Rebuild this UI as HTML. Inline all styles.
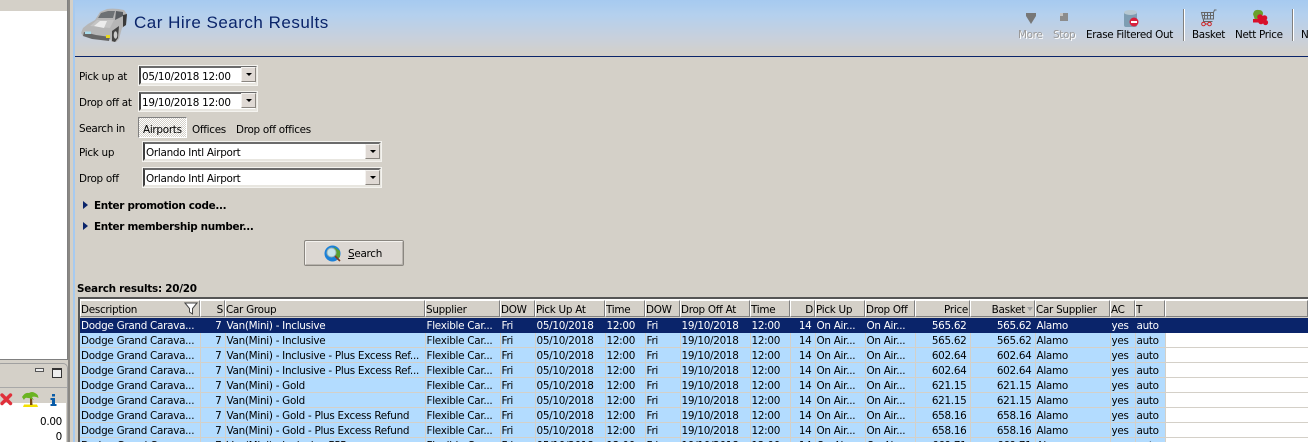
<!DOCTYPE html>
<html><head><meta charset="utf-8"><style>
html,body{margin:0;padding:0;width:1308px;height:442px;overflow:hidden;background:#d4d0c8;}
body{position:relative;font:10.4px "DejaVu Sans","Liberation Sans",sans-serif;color:#000;letter-spacing:-.28px;}
.a{position:absolute;white-space:nowrap;line-height:13px;}
.b{font-weight:bold;letter-spacing:-.3px;}
.box{position:absolute;box-sizing:border-box;background:#fff;border:2px solid;border-color:#6b6b6b #e8e6e0 #e8e6e0 #404040;outline:1px solid #f4f3ef;outline-offset:0;}
.btn{position:absolute;width:15px;height:15px;box-sizing:border-box;background:#dfd9d4;border:1px solid;border-color:#f4f2ef #8a8680 #8a8680 #f4f2ef;}
.btn:after{content:"";position:absolute;left:4px;top:5px;border:3px solid transparent;border-top:3px solid #000;border-bottom:0;}
table{position:absolute;left:80px;top:318px;border-collapse:collapse;table-layout:fixed;width:1228px;}
td{height:12px;padding:2px 1px 0 1px;border-right:1px solid #d4d0c8;border-bottom:1px solid #d4d0c8;background:#b3dcff;white-space:nowrap;overflow:hidden;line-height:12px;font-size:10.4px;box-sizing:content-box;}
td.r{text-align:right;padding-right:3px;}
td.f{background:#fff;border-right:0;}
tr.s td{background:#0a246a;color:#fff;border-color:#0a246a;}
.h{position:absolute;top:300px;height:17px;box-sizing:border-box;background:#d4d0c8;border:1px solid;border-color:#fff #808080 #808080 #fff;line-height:19px;padding:0;white-space:nowrap;overflow:hidden;}
.h.r{text-align:right;padding-right:1px;}
.t{position:absolute;top:29px;font-size:10.4px;line-height:13px;white-space:nowrap;letter-spacing:-.33px;}
.g{color:#9a9a9a;text-shadow:1px 1px 0 #fff;}
</style></head><body>
<!-- left panel -->
<div style="position:absolute;left:0;top:0;width:68px;height:11px;background:#d4d0c8"></div>
<div style="position:absolute;left:0;top:11px;width:67px;height:348px;background:#fff"></div>
<div style="position:absolute;left:0;top:359px;width:68px;height:1px;background:#808080"></div>
<div style="position:absolute;left:67px;top:0;width:1px;height:360px;background:#808080"></div>
<div style="position:absolute;left:68px;top:0;width:2px;height:442px;background:#8a8884"></div>
<div style="position:absolute;left:73px;top:0;width:2px;height:442px;background:#a6caf0"></div>
<div style="position:absolute;left:-4px;top:363px;width:72px;height:80px;box-sizing:border-box;border:1px solid #a0a0a0;border-radius:5px 5px 0 0"></div>
<div style="position:absolute;left:35px;top:368px;width:9px;height:4px;box-sizing:border-box;border:1px solid #555;background:#eee"></div>
<div style="position:absolute;left:52px;top:368px;width:10px;height:10px;box-sizing:border-box;border:1px solid #333;border-top-width:2px;background:#eee"></div>
<div style="position:absolute;left:0;top:387px;width:67px;height:1px;background:#a8a8a8"></div>
<div style="position:absolute;left:0;top:403px;width:66px;height:39px;background:#fff"></div>
<svg style="position:absolute;left:0;top:390px" width="66" height="18" viewBox="0 0 66 18">
<path d="M2 5L10.500 13.500M10.500 5L2 13.500" stroke="#e0303a" stroke-width="3.4" stroke-linecap="round"/>
<path d="M24 14.500h13l1 2.500H23z" fill="#f4e000"/>
<path d="M30 8h2l0.500 7h-2.500z" fill="#7a4a10"/>
<path d="M22 7Q25 2 29 3Q32 1 35 3Q38 4 38.500 8Q35 6 32 7Q33 9 34 10Q30 8 28 8Q25 7 24 10z" fill="#6ab422"/>
<rect x="52" y="4" width="3" height="2.500" fill="#0a5ca8"/><path d="M50.500 8h4.500v6h1.500v2h-6v-2h1.500v-4h-1.500z" fill="#0a5ca8"/>
</svg>
<div class="a" style="right:1246px;top:416px">0.00</div>
<div class="a" style="right:1246px;top:431px">0</div>
<!-- header band -->
<div style="position:absolute;left:75px;top:0;width:1233px;height:56px;background:linear-gradient(#a6caf0 0,#b4d0ee 15px,#c8d0dc 38px,#d4d0c8 56px)"></div>
<div style="position:absolute;left:75px;top:56px;width:1233px;height:1px;background:#0a246a"></div>
<svg style="position:absolute;left:80px;top:6px" width="50" height="38" viewBox="0 0 50 38">
<path d="M1 27L3 22L8 18L15 14L20 6L27 3Q36 2 44 4L47 8L46 19L42 22L39 33L36 36L32 36L30 33L12 31L3 30z" fill="#b6b6b6"/>
<path d="M21 7L28 5L35 5L33 12L18 12z" fill="#6d7174"/>
<path d="M36 5L43 6L43 10L35 14z" fill="#585c60"/>
<path d="M17 14L34 14L30 22L10 20z" fill="#c4c4c4"/>
<path d="M20 15L27 15L24 22L14 20z" fill="#ececec"/>
<path d="M4 26L16 29L30 31L29 35L12 33L3 30z" fill="#666"/>
<rect x="5" y="25.500" width="6" height="2.500" fill="#a8dcec"/><rect x="26" y="29" width="4" height="3" fill="#e8d820"/>
<path d="M32 25L39 20L38 32L35 36L32 35z" fill="#444"/><ellipse cx="35.500" cy="29" rx="1.800" ry="3.800" fill="#ccc"/>
<path d="M43 9L47 8L46 19L43 21z" fill="#3a3a3a"/>
</svg>
<div class="a" style="left:134px;top:12px;font:17px/21px 'Liberation Sans',sans-serif;letter-spacing:.5px;color:#0a246a">Car Hire Search Results</div>
<!-- toolbar -->
<svg style="position:absolute;left:1000px;top:8px" width="308" height="34" viewBox="0 0 308 34">
<path d="M26 5h10v3l-5 8-5-8z" fill="#777"/>
<rect x="60" y="5" width="8" height="8" fill="#8c8c8c"/><rect x="60" y="5" width="3" height="3" fill="#c4c4c4"/>
<rect x="124" y="4" width="13" height="15" rx="2" fill="#7e9db2"/><ellipse cx="130.500" cy="4.500" rx="6.500" ry="2.500" fill="#b6c8d2"/>
<circle cx="134" cy="14" r="4.500" fill="#d8203c"/><rect x="131" y="13" width="6" height="2" fill="#fff"/>
<rect x="183" y="1" width="1" height="32" fill="#808080"/><rect x="184" y="1" width="1" height="32" fill="#fff"/>
<rect x="292" y="1" width="1" height="32" fill="#808080"/><rect x="293" y="1" width="1" height="32" fill="#fff"/>
<path d="M201.500 4.500h12v6.500h-10.500zM213.500 4.500l1-2.500h2M202 7.500h11.500M203.500 11.500v2h9" fill="none" stroke="#666" stroke-width="1"/>
<path d="M204.500 4.500v6.500M207.500 4.500v6.500M210.500 4.500v6.500" stroke="#666"/>
<circle cx="203.500" cy="16" r="1.800" fill="none" stroke="#d02020"/><circle cx="209.500" cy="16" r="1.800" fill="none" stroke="#d02020"/><path d="M205.500 16h2" stroke="#d02020"/>
<path d="M253 6q1-5 6-4q4 0 4 4l-2 5-6 1z" fill="#6aa02a"/>
<circle cx="260" cy="9" r="2.800" fill="#d8102a"/><circle cx="264.500" cy="10" r="2.800" fill="#d8102a"/><circle cx="261" cy="13.500" r="2.800" fill="#d8102a"/><circle cx="265.500" cy="14.500" r="2.600" fill="#d8102a"/>
<rect x="253" y="11" width="6" height="3.500" fill="#d8102a"/>
</svg>
<div class="t g" style="left:1018px">More</div>
<div class="t g" style="left:1053px">Stop</div>
<div class="t" style="left:1086px">Erase Filtered Out</div>
<div class="t" style="left:1192px">Basket</div>
<div class="t" style="left:1235px">Nett Price</div>
<div class="t" style="left:1301px">N</div>
<!-- form -->
<div class="a" style="left:79px;top:71px">Pick up at</div>
<div class="box" style="left:139px;top:66px;width:118px;height:19px"></div>
<div class="a" style="left:142px;top:71px">05/10/2018 12:00</div>
<div class="btn" style="left:241px;top:67px"></div>
<div class="a" style="left:79px;top:97px">Drop off at</div>
<div class="box" style="left:139px;top:92px;width:118px;height:19px"></div>
<div class="a" style="left:142px;top:97px">19/10/2018 12:00</div>
<div class="btn" style="left:241px;top:93px"></div>
<div class="a" style="left:79px;top:123px">Search in</div>
<div style="position:absolute;left:138px;top:117px;width:49px;height:21px;box-sizing:border-box;border:1px solid;border-color:#808080 #fff #fff #808080;background:repeating-conic-gradient(#fff 0 25%,#d4d0c8 0 50%) 0 0/2px 2px"></div>
<div class="a" style="left:143px;top:124px">Airports</div>
<div class="a" style="left:192px;top:124px">Offices</div>
<div class="a" style="left:236px;top:124px">Drop off offices</div>
<div class="a" style="left:79px;top:147px">Pick up</div>
<div class="box" style="left:143px;top:142px;width:238px;height:19px"></div>
<div class="a" style="left:146px;top:147px">Orlando Intl Airport</div>
<div class="btn" style="left:365px;top:144px"></div>
<div class="a" style="left:79px;top:173px">Drop off</div>
<div class="box" style="left:143px;top:168px;width:238px;height:19px"></div>
<div class="a" style="left:146px;top:173px">Orlando Intl Airport</div>
<div class="btn" style="left:365px;top:170px"></div>
<div style="position:absolute;left:83px;top:201px;border:4px solid transparent;border-left:5px solid #0a246a;border-right:0"></div>
<div class="a b" style="left:94px;top:200px">Enter promotion code...</div>
<div style="position:absolute;left:83px;top:222px;border:4px solid transparent;border-left:5px solid #0a246a;border-right:0"></div>
<div class="a b" style="left:94px;top:221px">Enter membership number...</div>
<div style="position:absolute;left:304px;top:240px;width:100px;height:26px;box-sizing:border-box;background:#dcd7d2;border:1px solid #8a8680;border-radius:2px;box-shadow:inset 1px 1px 0 #f4f2ef,inset -1px -1px 0 #b8b4ae"></div>
<svg style="position:absolute;left:324px;top:245px" width="18" height="18" viewBox="0 0 18 18">
<circle cx="8.500" cy="8.500" r="8" fill="#1a80d8"/><path d="M10 2l6 4 0 6-3 2-2-5z" fill="#58a030"/>
<circle cx="7.500" cy="7.500" r="4.500" fill="#c8e4ea" stroke="#9ab0b0"/><path d="M11 11l5 5" stroke="#804020" stroke-width="1.600"/>
</svg>
<div class="a" style="left:348px;top:248px"><u>S</u>earch</div>
<div class="a b" style="left:77px;top:283px;letter-spacing:-.24px">Search results: 20/20</div>
<!-- grid -->
<div style="position:absolute;left:78px;top:297px;width:1230px;height:145px;border-top:2px solid #555;border-left:2px solid #555;box-sizing:border-box;background:#fff"></div>
<div style="position:absolute;left:80px;top:299px;width:1228px;height:19px;background:#d4d0c8;border-top:1px solid #fff;box-sizing:border-box"></div>
<div class="h" style="left:80px;width:120px">Description<svg style="position:absolute;left:103px;top:1px" width="14" height="13" viewBox="0 0 14 13"><path d="M1 1h12L8.500 6.500V12L5.500 10V6.500z" fill="#fff" stroke="#444"/></svg></div>
<div class="h r" style="left:200px;width:25px">S</div>
<div class="h" style="left:225px;width:200px">Car Group</div>
<div class="h" style="left:425px;width:75px">Supplier</div>
<div class="h" style="left:500px;width:35px">DOW</div>
<div class="h" style="left:535px;width:70px">Pick Up At</div>
<div class="h" style="left:605px;width:40px">Time</div>
<div class="h" style="left:645px;width:35px">DOW</div>
<div class="h" style="left:680px;width:70px">Drop Off At</div>
<div class="h" style="left:750px;width:40px">Time</div>
<div class="h r" style="left:790px;width:25px">D</div>
<div class="h" style="left:815px;width:50px">Pick Up</div>
<div class="h" style="left:865px;width:50px">Drop Off</div>
<div class="h r" style="left:915px;width:55px">Price</div>
<div class="h r" style="left:970px;width:65px;padding-right:9px">Basket<span style="position:absolute;right:1px;top:6px;border:3.500px solid transparent;border-top:4px solid #a0a0a0;border-bottom:0"></span></div>
<div class="h" style="left:1035px;width:75px">Car Supplier</div>
<div class="h" style="left:1110px;width:25px">AC</div>
<div class="h" style="left:1135px;width:30px">T</div>
<div class="h" style="left:1165px;width:143px"></div>
<table>
<colgroup><col style="width:120px"><col style="width:25px"><col style="width:200px"><col style="width:75px"><col style="width:35px"><col style="width:70px"><col style="width:40px"><col style="width:35px"><col style="width:70px"><col style="width:40px"><col style="width:25px"><col style="width:50px"><col style="width:50px"><col style="width:55px"><col style="width:65px"><col style="width:75px"><col style="width:25px"><col style="width:30px"><col style="width:143px"></colgroup>
<tr class="s"><td>Dodge Grand Carava...</td><td class="r">7</td><td>Van(Mini) - Inclusive</td><td>Flexible Car...</td><td>Fri</td><td>05/10/2018</td><td>12:00</td><td>Fri</td><td>19/10/2018</td><td>12:00</td><td class="r">14</td><td>On Air...</td><td>On Air...</td><td class="r">565.62</td><td class="r">565.62</td><td>Alamo</td><td>yes</td><td>auto</td><td class="f"></td></tr>
<tr><td>Dodge Grand Carava...</td><td class="r">7</td><td>Van(Mini) - Inclusive</td><td>Flexible Car...</td><td>Fri</td><td>05/10/2018</td><td>12:00</td><td>Fri</td><td>19/10/2018</td><td>12:00</td><td class="r">14</td><td>On Air...</td><td>On Air...</td><td class="r">565.62</td><td class="r">565.62</td><td>Alamo</td><td>yes</td><td>auto</td><td class="f"></td></tr>
<tr><td>Dodge Grand Carava...</td><td class="r">7</td><td>Van(Mini) - Inclusive - Plus Excess Ref...</td><td>Flexible Car...</td><td>Fri</td><td>05/10/2018</td><td>12:00</td><td>Fri</td><td>19/10/2018</td><td>12:00</td><td class="r">14</td><td>On Air...</td><td>On Air...</td><td class="r">602.64</td><td class="r">602.64</td><td>Alamo</td><td>yes</td><td>auto</td><td class="f"></td></tr>
<tr><td>Dodge Grand Carava...</td><td class="r">7</td><td>Van(Mini) - Inclusive - Plus Excess Ref...</td><td>Flexible Car...</td><td>Fri</td><td>05/10/2018</td><td>12:00</td><td>Fri</td><td>19/10/2018</td><td>12:00</td><td class="r">14</td><td>On Air...</td><td>On Air...</td><td class="r">602.64</td><td class="r">602.64</td><td>Alamo</td><td>yes</td><td>auto</td><td class="f"></td></tr>
<tr><td>Dodge Grand Carava...</td><td class="r">7</td><td>Van(Mini) - Gold</td><td>Flexible Car...</td><td>Fri</td><td>05/10/2018</td><td>12:00</td><td>Fri</td><td>19/10/2018</td><td>12:00</td><td class="r">14</td><td>On Air...</td><td>On Air...</td><td class="r">621.15</td><td class="r">621.15</td><td>Alamo</td><td>yes</td><td>auto</td><td class="f"></td></tr>
<tr><td>Dodge Grand Carava...</td><td class="r">7</td><td>Van(Mini) - Gold</td><td>Flexible Car...</td><td>Fri</td><td>05/10/2018</td><td>12:00</td><td>Fri</td><td>19/10/2018</td><td>12:00</td><td class="r">14</td><td>On Air...</td><td>On Air...</td><td class="r">621.15</td><td class="r">621.15</td><td>Alamo</td><td>yes</td><td>auto</td><td class="f"></td></tr>
<tr><td>Dodge Grand Carava...</td><td class="r">7</td><td>Van(Mini) - Gold - Plus Excess Refund</td><td>Flexible Car...</td><td>Fri</td><td>05/10/2018</td><td>12:00</td><td>Fri</td><td>19/10/2018</td><td>12:00</td><td class="r">14</td><td>On Air...</td><td>On Air...</td><td class="r">658.16</td><td class="r">658.16</td><td>Alamo</td><td>yes</td><td>auto</td><td class="f"></td></tr>
<tr><td>Dodge Grand Carava...</td><td class="r">7</td><td>Van(Mini) - Gold - Plus Excess Refund</td><td>Flexible Car...</td><td>Fri</td><td>05/10/2018</td><td>12:00</td><td>Fri</td><td>19/10/2018</td><td>12:00</td><td class="r">14</td><td>On Air...</td><td>On Air...</td><td class="r">658.16</td><td class="r">658.16</td><td>Alamo</td><td>yes</td><td>auto</td><td class="f"></td></tr>
<tr><td>Dodge Grand Carava...</td><td class="r">7</td><td>Van(Mini) - Inclusive FSP</td><td>Flexible Car...</td><td>Fri</td><td>05/10/2018</td><td>12:00</td><td>Fri</td><td>19/10/2018</td><td>12:00</td><td class="r">14</td><td>On Air...</td><td>On Air...</td><td class="r">669.71</td><td class="r">669.71</td><td>Alamo</td><td>yes</td><td>auto</td><td class="f"></td></tr>
</table>
</body></html>
